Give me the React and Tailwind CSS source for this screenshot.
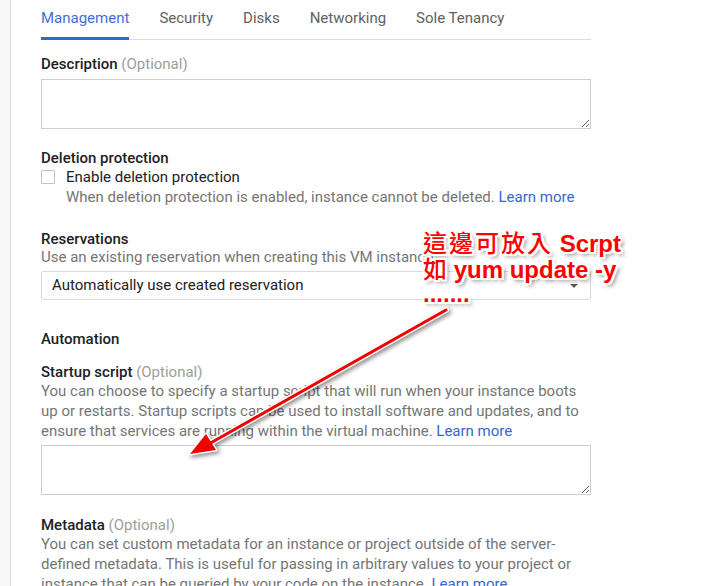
import React from "react";

const tabs = ["Management", "Security", "Disks", "Networking", "Sole Tenancy"];

const Label = ({ children, optional, className = "" }) => (
  <div className={`leading-[18px] font-medium text-[#202124] ${className}`}>
    {children}
    {optional && <span className="font-normal text-[#9e9e9e]"> (Optional)</span>}
  </div>
);

const Help = ({ children, className = "" }) => (
  <p className={`leading-5 text-[#757575] ${className}`}>{children}</p>
);

const LearnMore = () => <a className="text-[#3367d6]">Learn more</a>;

const Area = ({ className = "" }) => (
  <textarea className={`block w-full h-[50px] border border-[#cfcfcf] bg-white outline-none ${className}`} />
);

const App = () => {
  return (
    <div className="relative flex w-full h-[586px] overflow-hidden bg-white font-['Roboto',sans-serif] text-[15px]">
      <aside className="w-[11px] shrink-0 bg-[#f8f8f8] border-r border-[#dedede]" />

      <main className="pl-[30px] w-[580px]">
        <div className="flex gap-[30px] h-10 border-b border-[#dcdcdc]">
          {tabs.map((t, i) => (
            <div
              key={t}
              className={`pt-2 leading-5 h-10 -mb-px ${
                i === 0
                  ? "text-[#3f6fd6] border-b-[3px] border-[#3367d6]"
                  : "text-[#616161]"
              }`}
            >
              {t}
            </div>
          ))}
        </div>

        <Label optional className="mt-[15px] leading-5">Description</Label>
        <Area className="mt-[6px]" />

        <Label className="mt-[20px]">Deletion protection</Label>
        <label className="flex items-center h-[20px] gap-[11px]">
          <span className="w-[14px] h-[14px] border border-[#c4c4c4] rounded-[1px] bg-white" />
          <span className="text-[#212121]">Enable deletion protection</span>
        </label>
        <Help className="pl-[25px]">
          When deletion protection is enabled, instance cannot be deleted. <LearnMore />
        </Help>

        <Label className="mt-[23px]">Reservations</Label>
        <p className="leading-[18px] text-[#757575] whitespace-nowrap">
          Use an existing reservation when creating this VM instance
        </p>
        <div className="mt-[5px] flex items-center justify-between h-[29px] px-[10px] border border-[#dadada] rounded-[2px] bg-white text-[#212121]">
          <span>Automatically use created reservation</span>
          <svg width="10" height="6" viewBox="0 0 10 6" className="mr-[1px]">
            <polygon points="1,1 9,1 5,5" fill="#5a5a5a" />
          </svg>
        </div>

        <div className="mt-[29px] leading-5 font-medium text-[#202124]">Automation</div>

        <Label optional className="mt-[14px]">Startup script</Label>
        <Help>
          You can choose to specify a startup script that will run when your instance boots
          up or restarts. Startup scripts can be used to install software and updates, and to
          ensure that services are running within the virtual machine. <LearnMore />
        </Help>
        <Area className="mt-[4px]" />

        <Label optional className="mt-[21px]">Metadata</Label>
        <Help>
          You can set custom metadata for an instance or project outside of the server-defined
          metadata. This is useful for passing in arbitrary values to your project or
          instance that can be queried by your code on the instance. <LearnMore />
        </Help>
      </main>

      {/* annotation overlay */}
      <svg
        className="absolute inset-0 pointer-events-none [filter:drop-shadow(2px_2px_2px_rgba(0,0,0,0.45))]"
        width="716"
        height="586"
      >
        <line x1="446" y1="310" x2="207" y2="445" stroke="#fff" strokeWidth="6" strokeLinecap="round" />
        <polygon points="190,454 216,450 206,434" fill="#fff" stroke="#fff" strokeWidth="3" strokeLinejoin="round" />
        <line x1="446" y1="310" x2="207" y2="445" stroke="#f20000" strokeWidth="3" strokeLinecap="round" />
        <polygon points="190,454 216,450 206,434" fill="#f20000" />
      </svg>

      <div className="absolute left-[423px] top-[228px] text-[24px] text-[#ff0000] whitespace-nowrap [text-shadow:-2px_-2px_0_#fff,2px_-2px_0_#fff,-2px_2px_0_#fff,2px_2px_0_#fff,0_-2px_0_#fff,0_2px_0_#fff,-2px_0_0_#fff,2px_0_0_#fff,3px_3px_4px_rgba(0,0,0,0.55)]">
        <div className="h-[27px] leading-[27px]">
          <span className="font-['Noto_Sans_CJK_TC',sans-serif] font-medium tracking-[2px]">這邊可放入</span>
          <span className="font-['Liberation_Sans',sans-serif] font-bold"> Scrpt</span>
        </div>
        <div className="h-[26px] leading-[26px]">
          <span className="font-['Noto_Sans_CJK_TC',sans-serif] font-medium">如</span>
          <span className="font-['Liberation_Sans',sans-serif] font-bold"> yum update -y</span>
        </div>
        <div className="h-[26px] leading-[26px] font-['Liberation_Sans',sans-serif] font-bold">.......</div>
      </div>
    </div>
  );
};

export default App;
